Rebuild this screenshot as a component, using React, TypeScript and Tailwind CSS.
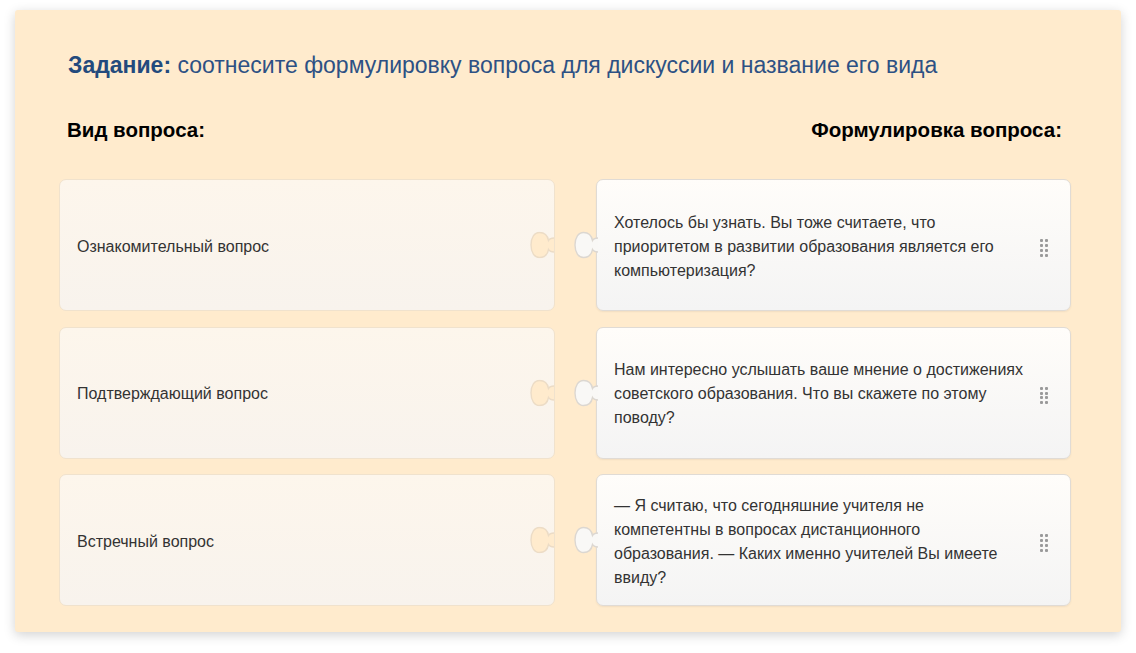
import React from 'react';

interface Pair {
  kind: string;
  text: string[];
}

const pairs: Pair[] = [
  {
    kind: 'Ознакомительный вопрос',
    text: [
      'Хотелось бы узнать. Вы тоже считаете, что',
      'приоритетом в развитии образования является его',
      'компьютеризация?',
    ],
  },
  {
    kind: 'Подтверждающий вопрос',
    text: [
      'Нам интересно услышать ваше мнение о достижениях',
      'советского образования. Что вы скажете по этому',
      'поводу?',
    ],
  },
  {
    kind: 'Встречный вопрос',
    text: [
      '— Я считаю, что сегодняшние учителя не',
      'компетентны в вопросах дистанционного',
      'образования. — Каких именно учителей Вы имеете',
      'ввиду?',
    ],
  },
];

const piece =
  'M24 6.5 Q20 6.5 18.5 9 C17.5 3.5 14 1 9.5 1 C4.5 1 1 6 1 13.5 C1 21 4.5 26 9.5 26 C14 26 17.5 23.5 18.5 18 Q20 20.5 24 20.5';

// hole cut into the right edge of the left card
function Socket() {
  return (
    <svg
      width="24"
      height="27"
      viewBox="0 0 24 27"
      className="absolute right-0 top-1/2 -translate-y-1/2"
    >
      <path d={piece + ' Z'} fill="#ffebcd" />
      <path d={piece} fill="none" stroke="#ecdcc6" strokeWidth="1.4" />
    </svg>
  );
}

// knob sticking out of the left edge of the right card
function Knob() {
  return (
    <svg
      width="24"
      height="27"
      viewBox="0 0 24 27"
      className="absolute left-[-23px] top-1/2 -translate-y-1/2 overflow-visible"
    >
      <path d={piece + ' Z'} fill="#f9f8f6" />
      <path d={piece} fill="none" stroke="#dcd7d1" strokeWidth="1.4" />
    </svg>
  );
}

function Handle() {
  return (
    <div className="grid grid-cols-2 gap-x-[2px] gap-y-[1.7px] shrink-0 mt-[3px]">
      {Array.from({ length: 8 }).map((_, i) => (
        <span key={i} className="w-[3px] h-[3px] rounded-[1px] bg-[#9a9a9a]" />
      ))}
    </div>
  );
}

export default function App() {
  return (
    <div
      className="w-[1136px] h-[653px] bg-white pt-[10px] pl-[15px]"
      style={{ fontFamily: '"Liberation Sans", Arial, sans-serif' }}
    >
      <div className="w-[1106px] h-[622px] bg-[#ffebcd] rounded-[3px] shadow-[0_3px_12px_rgba(0,0,0,0.18)] pt-[41px] pl-[44px] pr-[50px]">
        <h1 className="px-[9px] text-[23px] leading-[28px] text-[#2d5184]">
          <span className="font-bold text-[#234a7d]">Задание:</span> соотнесите формулировку вопроса для дискуссии и название его вида
        </h1>

        <div className="mt-[39px] px-[8px] flex justify-between text-[20.5px] leading-[24px] font-bold text-black">
          <span>Вид вопроса:</span>
          <span className="mr-[1px]">Формулировка вопроса:</span>
        </div>

        <div className="mt-[37px] flex flex-col gap-[15.5px]">
          {pairs.map((p) => (
            <div key={p.kind} className="flex justify-between h-[132px]">
              <div className="relative w-[496px] h-full rounded-[7px] border border-[#f0e2cd] bg-gradient-to-b from-[#fdf6ec] to-[#f8f3ed] flex items-center pl-[17px] pt-[3px] text-[16px] leading-[24px] text-[#333]">
                {p.kind}
                <Socket />
              </div>
              <div className="relative w-[475px] h-full rounded-[7px] border border-[#e0dbd5] bg-gradient-to-b from-[#fffdfa] to-[#f4f4f4] flex items-center pl-[17px] pr-[22px] pt-[3px] shadow-[0_1px_2px_rgba(0,0,0,0.06)]">
                <Knob />
                <div className="flex-1 text-[16px] leading-[24px] text-[#333]">
                  {p.text.map((line, i) => (
                    <div key={i} className="whitespace-nowrap">
                      {line}
                    </div>
                  ))}
                </div>
                <Handle />
              </div>
            </div>
          ))}
        </div>
      </div>
    </div>
  );
}
